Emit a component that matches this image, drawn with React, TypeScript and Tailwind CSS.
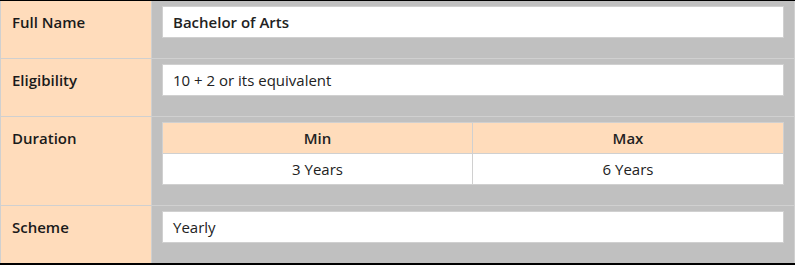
const rows = [
  { label: 'Full Name', value: 'Bachelor of Arts', strong: true },
  { label: 'Eligibility', value: '10 + 2 or its equivalent' },
  { label: 'Duration', duration: { min: '3 Years', max: '6 Years' } },
  { label: 'Scheme', value: 'Yearly' },
];

type Row = (typeof rows)[number] & { strong?: boolean; duration?: { min: string; max: string }; value?: string };

function Field({ row }: { row: Row }) {
  if (row.duration) {
    return (
      <div className="border border-[#d0d0d0] bg-white text-[15px] text-[#222]">
        <div className="grid grid-cols-2 bg-[#ffdcbb] font-semibold">
          <div className="h-[30px] flex items-center justify-center border-r border-[#d0d0d0]">Min</div>
          <div className="h-[30px] flex items-center justify-center">Max</div>
        </div>
        <div className="grid grid-cols-2 border-t border-[#d0d0d0]">
          <div className="h-[30px] flex items-center justify-center border-r border-[#d0d0d0]">
            {row.duration.min}
          </div>
          <div className="h-[30px] flex items-center justify-center">{row.duration.max}</div>
        </div>
      </div>
    );
  }
  return (
    <div
      className={`h-[32px] border border-[#d0d0d0] bg-white px-[10px] flex items-center text-[15px] text-[#222] ${
        row.strong ? 'font-semibold' : ''
      }`}
    >
      {row.value}
    </div>
  );
}

export default function App() {
  return (
    <div
      className="w-[795px] h-[265px] bg-white border-t border-b-2 border-black"
      style={{ fontFamily: '"Open Sans", "Noto Sans", sans-serif' }}
    >
      <div className="border-x border-[#d0d0d0] bg-[#c0c0c0]">
        {(rows as Row[]).map((row, i) => (
          <div
            key={row.label}
            className={`grid grid-cols-[151px_1fr] ${i > 0 ? 'border-t border-[#d0d0d0]' : ''}`}
          >
            <div className="bg-[#ffdcbb] border-r border-[#d0d0d0] pl-[11px] pt-[11px] text-[15px] leading-[20px] font-semibold text-[#1a1a1a]">
              {row.label}
            </div>
            <div className="pt-[5px] pb-[20px] px-[10px]">
              <Field row={row} />
            </div>
          </div>
        ))}
      </div>
    </div>
  );
}
